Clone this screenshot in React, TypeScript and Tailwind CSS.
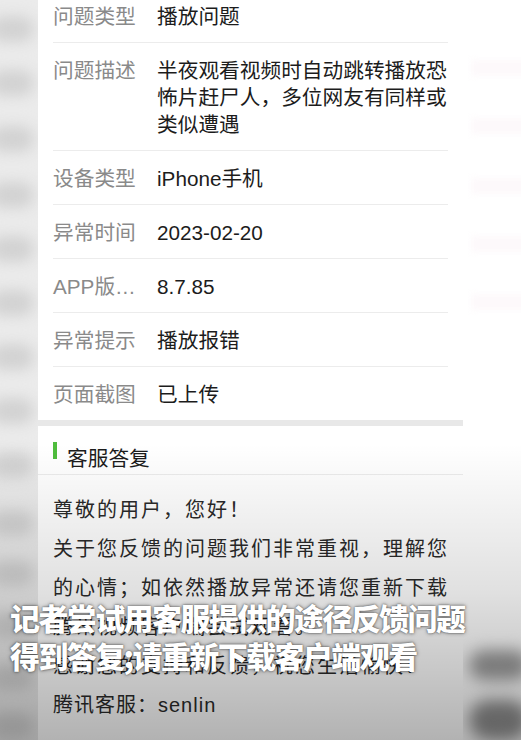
const ROWS = [
  { label: "问题类型", value: "播放问题" },
  {
    label: "问题描述",
    value: "半夜观看视频时自动跳转播放恐怖片赶尸人，多位网友有同样或类似遭遇",
  },
  { label: "设备类型", value: "iPhone手机" },
  { label: "异常时间", value: "2023-02-20" },
  { label: "APP版…", value: "8.7.85" },
  { label: "异常提示", value: "播放报错" },
  { label: "页面截图", value: "已上传" },
];

/* blurred copy of the page seen at the left edge of the video frame */
const LEFT_BLOCKS = [16, 70, 126, 182, 236, 290, 344, 398, 452, 510, 560, 612, 664, 712];

export default function App() {
  return (
    <div className="relative flex h-[740px] w-[521px] overflow-hidden bg-[#f2f2f2] font-['Liberation_Sans','Noto_Sans_CJK_SC',sans-serif]">
      {/* ── Left blurred strip ── */}
      <div className="relative w-[38px] shrink-0 overflow-hidden bg-[#ebebeb]">
        {LEFT_BLOCKS.map((y) => (
          <div
            key={y}
            className="absolute left-[-10px] h-[26px] w-[44px] rounded-full bg-[#d2d2d2] blur-[7px]"
            style={{ top: y }}
          />
        ))}
      </div>

      {/* ── Card ── */}
      <main className="flex w-[425px] shrink-0 flex-col bg-white">
        <section className="-mt-[11px] px-[15px]">
          {ROWS.map((r, i) => (
            <div
              key={r.label}
              className={`flex pt-[14px] pb-[12px] text-[20.7px] leading-[27px] ${
                i < ROWS.length - 1 ? "border-b border-[#ececec]" : ""
              }`}
            >
              <div className="w-[104px] shrink-0 text-[#8a8a8a]">{r.label}</div>
              <div className="flex-1 text-[#1c1c1c]">{r.value}</div>
            </div>
          ))}
        </section>

        <div className="h-[6px] bg-[#e8e8e8]" />

        <div className="flex h-[49px] items-start border-b border-[#ececec] px-[15px]">
          <div className="mt-[16px] h-[17px] w-[4px] bg-[#4fbd3d]" />
          <div className="ml-[10px] mt-[19px] text-[20.7px] leading-[27px] text-[#1c1c1c]">
            客服答复
          </div>
        </div>

        <div className="flex-1 px-[15px] pt-[16px] text-[20px] leading-[39px] tracking-[2px] text-[#2a2a2a]">
          <p>尊敬的用户，您好！</p>
          <p className="w-[398px]">
            关于您反馈的问题我们非常重视，理解您的心情；如依然播放异常还请您重新下载腾讯视频客户端尝试观看。
          </p>
          <p>感谢您的支持和反馈，祝您生活愉快！</p>
          <p className="tracking-[1px]">腾讯客服：senlin</p>
        </div>
      </main>

      {/* ── Right strip ── */}
      <div className="relative flex-1 overflow-hidden bg-white">
        {[60, 118, 178, 236, 294].map((y) => (
          <div
            key={y}
            className="absolute left-[8px] h-[16px] w-[60px] bg-[#fdf9fb] blur-[3px]"
            style={{ top: y }}
          />
        ))}
        <div className="absolute left-[6px] top-[650px] h-[30px] w-[60px] rounded-full bg-[#9c9c9c] blur-[8px]" />
        <div className="absolute left-[6px] top-[700px] h-[40px] w-[60px] rounded-full bg-[#8e8e8e] blur-[8px]" />
      </div>

      {/* ── Video vignette ── */}
      <div className="pointer-events-none absolute inset-0 bg-[linear-gradient(to_bottom,transparent_60%,rgba(0,0,0,0.12)_80%,rgba(0,0,0,0.3)_100%)]" />

      {/* ── Subtitle ── */}
      <div className="pointer-events-none absolute left-[10px] top-[598px] font-['Noto_Sans_CJK_SC',sans-serif] text-[30px] font-black leading-[38px] tracking-[-1.6px] text-white [text-shadow:0_0_2px_rgba(0,0,0,0.6),0_0_4px_rgba(0,0,0,0.4)]">
        <div>记者尝试用客服提供的途径反馈问题</div>
        <div>得到答复;请重新下载客户端观看</div>
      </div>
    </div>
  );
}
